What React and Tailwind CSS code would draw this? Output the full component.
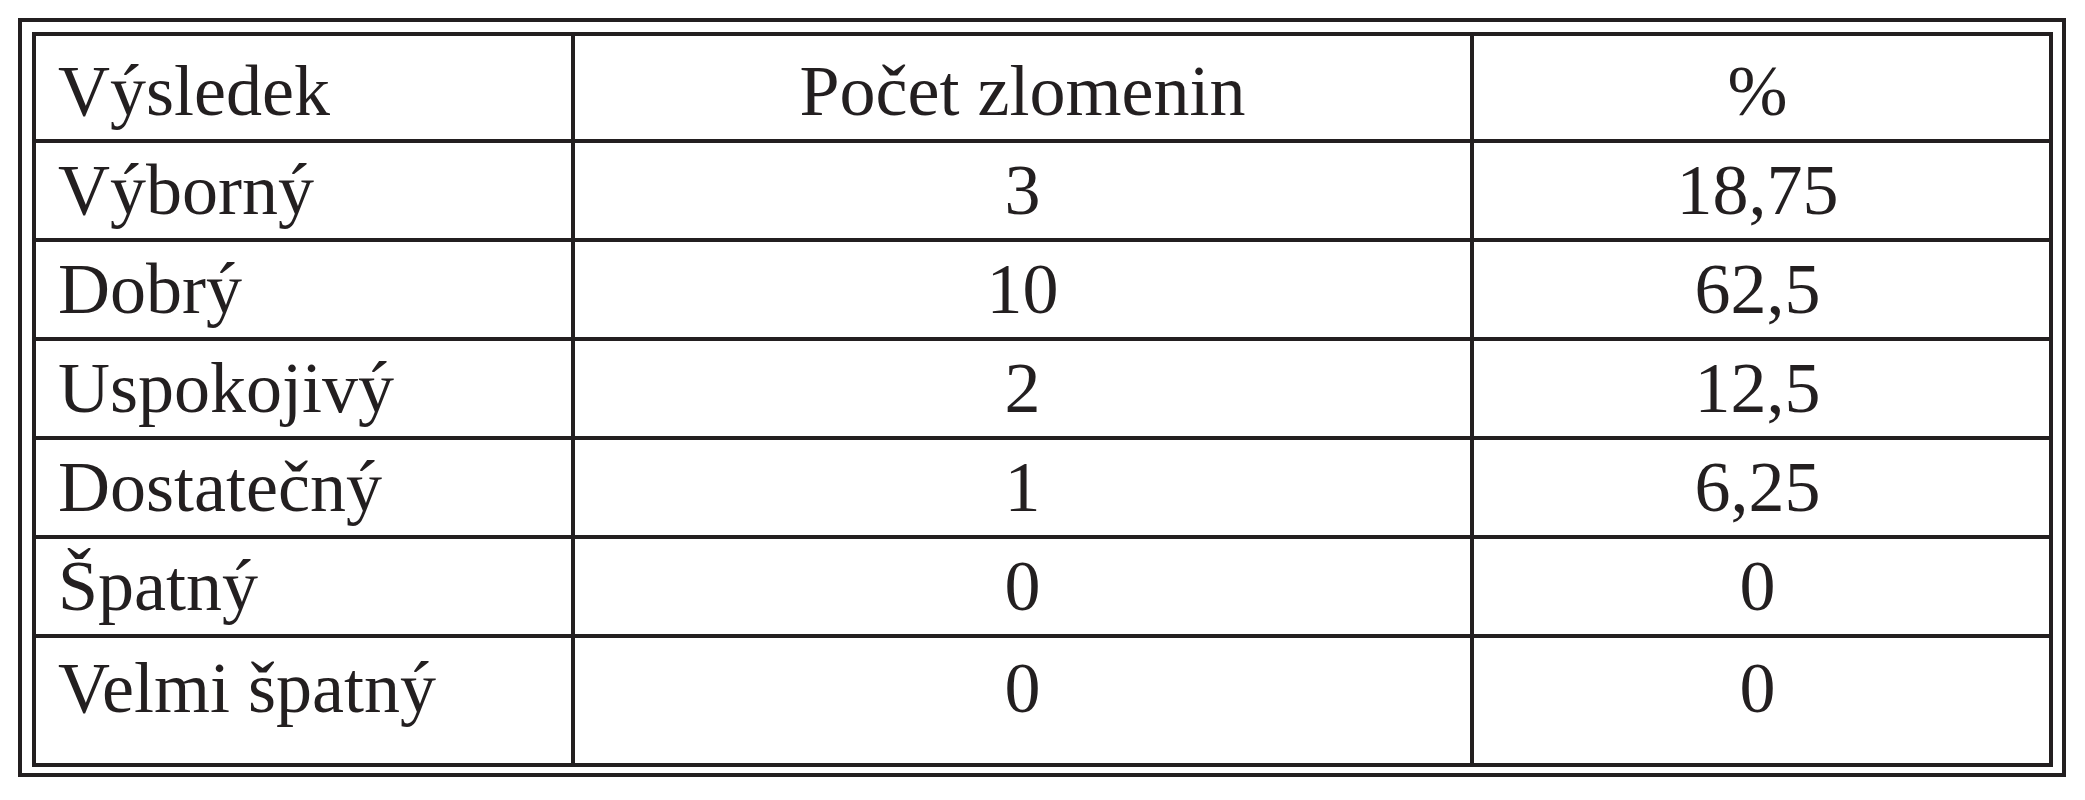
import React from "react";

const rows = [
  ["Výborný", "3", "18,75"],
  ["Dobrý", "10", "62,5"],
  ["Uspokojivý", "2", "12,5"],
  ["Dostatečný", "1", "6,25"],
  ["Špatný", "0", "0"],
  ["Velmi špatný", "0", "0"],
];

const Row = ({ cells, className, pad }) => (
  <div className={`flex ${className}`}>
    <div className={`w-[539px] shrink-0 border-r-4 border-[#231f20] pl-[22px] ${pad}`}>
      {cells[0]}
    </div>
    <div className={`w-[899px] shrink-0 border-r-4 border-[#231f20] text-center ${pad}`}>
      {cells[1]}
    </div>
    <div className={`w-[567px] shrink-0 text-center ${pad}`}>{cells[2]}</div>
  </div>
);

const App = () => {
  return (
    <div className="w-[2085px] h-[800px] bg-white pt-[18px] pl-[18px]">
      <div className="w-[2048px] h-[759px] border-4 border-[#231f20] pt-[10px] pl-[10px]">
        <div
          className="w-[2021px] h-[735px] border-4 border-[#231f20] text-[72px] leading-[72px] text-[#231f20]"
          style={{ fontFamily: '"Liberation Serif", "Times New Roman", serif' }}
        >
          <Row
            cells={["Výsledek", "Počet zlomenin", "%"]}
            className="h-[107px] border-b-4 border-[#231f20]"
            pad="pt-[19px]"
          />
          {rows.map((r, i) =>
            i === rows.length - 1 ? (
              <Row key={i} cells={r} className="h-[125px]" pad="pt-[14px]" />
            ) : (
              <Row
                key={i}
                cells={r}
                className="h-[99px] border-b-4 border-[#231f20]"
                pad="pt-[11px]"
              />
            )
          )}
        </div>
      </div>
    </div>
  );
};

export default App;
